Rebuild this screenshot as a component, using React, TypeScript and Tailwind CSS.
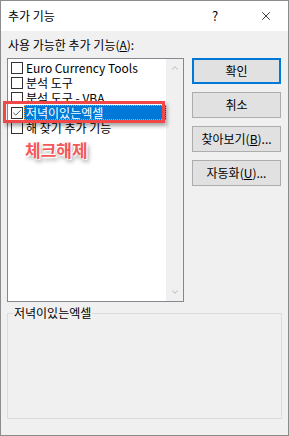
import { Check, ChevronUp, ChevronDown, X } from "lucide-react";

const font = { fontFamily: '"Noto Sans CJK KR", "Noto Sans", sans-serif' };

const items = [
  { label: "Euro Currency Tools", checked: false },
  { label: "분석 도구", checked: false },
  { label: "분석 도구 - VBA", checked: false },
  { label: "저녁이있는엑셀", checked: true, selected: true },
  { label: "해 찾기 추가 기능", checked: false },
];

const Btn = ({ children, primary }: { children: React.ReactNode; primary?: boolean }) => (
  <button
    className={`w-[89px] h-[26px] bg-[#e1e1e1] text-[12px] leading-none text-black flex items-center justify-center ${
      primary ? "border-2 border-[#0078d7]" : "border border-[#adadad]"
    }`}
  >
    {children}
  </button>
);

const App = () => {
  return (
    <div style={font} className="relative w-[289px] h-[436px] border border-[#8c8c8c] flex flex-col text-black overflow-hidden">
      {/* title bar */}
      <div className="h-[30px] bg-white flex items-center pl-[7px] shrink-0">
        <span className="text-[12px] flex-1">추가 기능</span>
        <span className="text-[13px] w-[12px] mr-[35px]">?</span>
        <X className="w-[14px] h-[14px] mr-[15px]" strokeWidth={1.3} />
      </div>

      <div className="flex-1 bg-[#f0f0f0] pl-[6px] pt-[6px]">
        <div className="text-[12px] leading-[16px] pl-[1px] mb-[5px]">
          사용 가능한 추가 기능(<span className="underline">A</span>):
        </div>

        <div className="flex gap-[8px]">
          {/* list box */}
          <div className="w-[177px] h-[244px] border border-[#828790] bg-white flex">
            <div className="flex-1 pt-[1px]">
              {items.map((it) => (
                <div key={it.label} className="h-[15px] flex items-center pl-[3px]">
                  <div className="w-[12px] h-[12px] border border-[#333] bg-white flex items-center justify-center shrink-0">
                    {it.checked && <Check className="w-[10px] h-[10px] text-[#333]" strokeWidth={2} />}
                  </div>
                  <div
                    className={`ml-[1px] flex-1 h-[15px] pl-[2px] text-[12px] leading-[15px] whitespace-nowrap ${
                      it.selected ? "bg-[#0078d7] text-white outline-1 outline-dotted outline-[#f5a623] -outline-offset-1" : ""
                    }`}
                  >
                    {it.label}
                  </div>
                </div>
              ))}
            </div>
            <div className="w-[17px] bg-[#f0f0f0] flex flex-col justify-between items-center py-[4px]">
              <ChevronUp className="w-[10px] h-[10px] text-[#c0c0c0]" strokeWidth={2.5} />
              <ChevronDown className="w-[10px] h-[10px] text-[#c0c0c0]" strokeWidth={2.5} />
            </div>
          </div>

          {/* buttons */}
          <div className="flex flex-col gap-[8px]">
            <Btn primary>확인</Btn>
            <Btn>취소</Btn>
            <Btn>
              찾아보기(<span className="underline">B</span>)...
            </Btn>
            <Btn>
              자동화(<span className="underline">U</span>)...
            </Btn>
          </div>
        </div>

        <fieldset className="mt-[4px] w-[275px] h-[113px] border border-[#dcdcdc] px-[4px]">
          <legend className="text-[12px] leading-[14px] px-[1px] ml-[1px]">저녁이있는엑셀</legend>
        </fieldset>
      </div>

      {/* annotation overlay */}
      <div className="absolute left-[2px] top-[100px] w-[162px] h-[22px] border-[3px] border-[#f04848] shadow-[2px_3px_4px_rgba(0,0,0,0.35)]" />
      <div
        className="absolute left-[24px] top-[136px] text-[17px] font-bold text-[#f25a5a]"
        style={{ textShadow: "0 0 2px #fff, 0 0 3px #fff, 1px 1px 0 #fff, -1px -1px 0 #fff, 2px 3px 4px rgba(0,0,0,0.45)" }}
      >
        체크해제
      </div>
    </div>
  );
};

export default App;
